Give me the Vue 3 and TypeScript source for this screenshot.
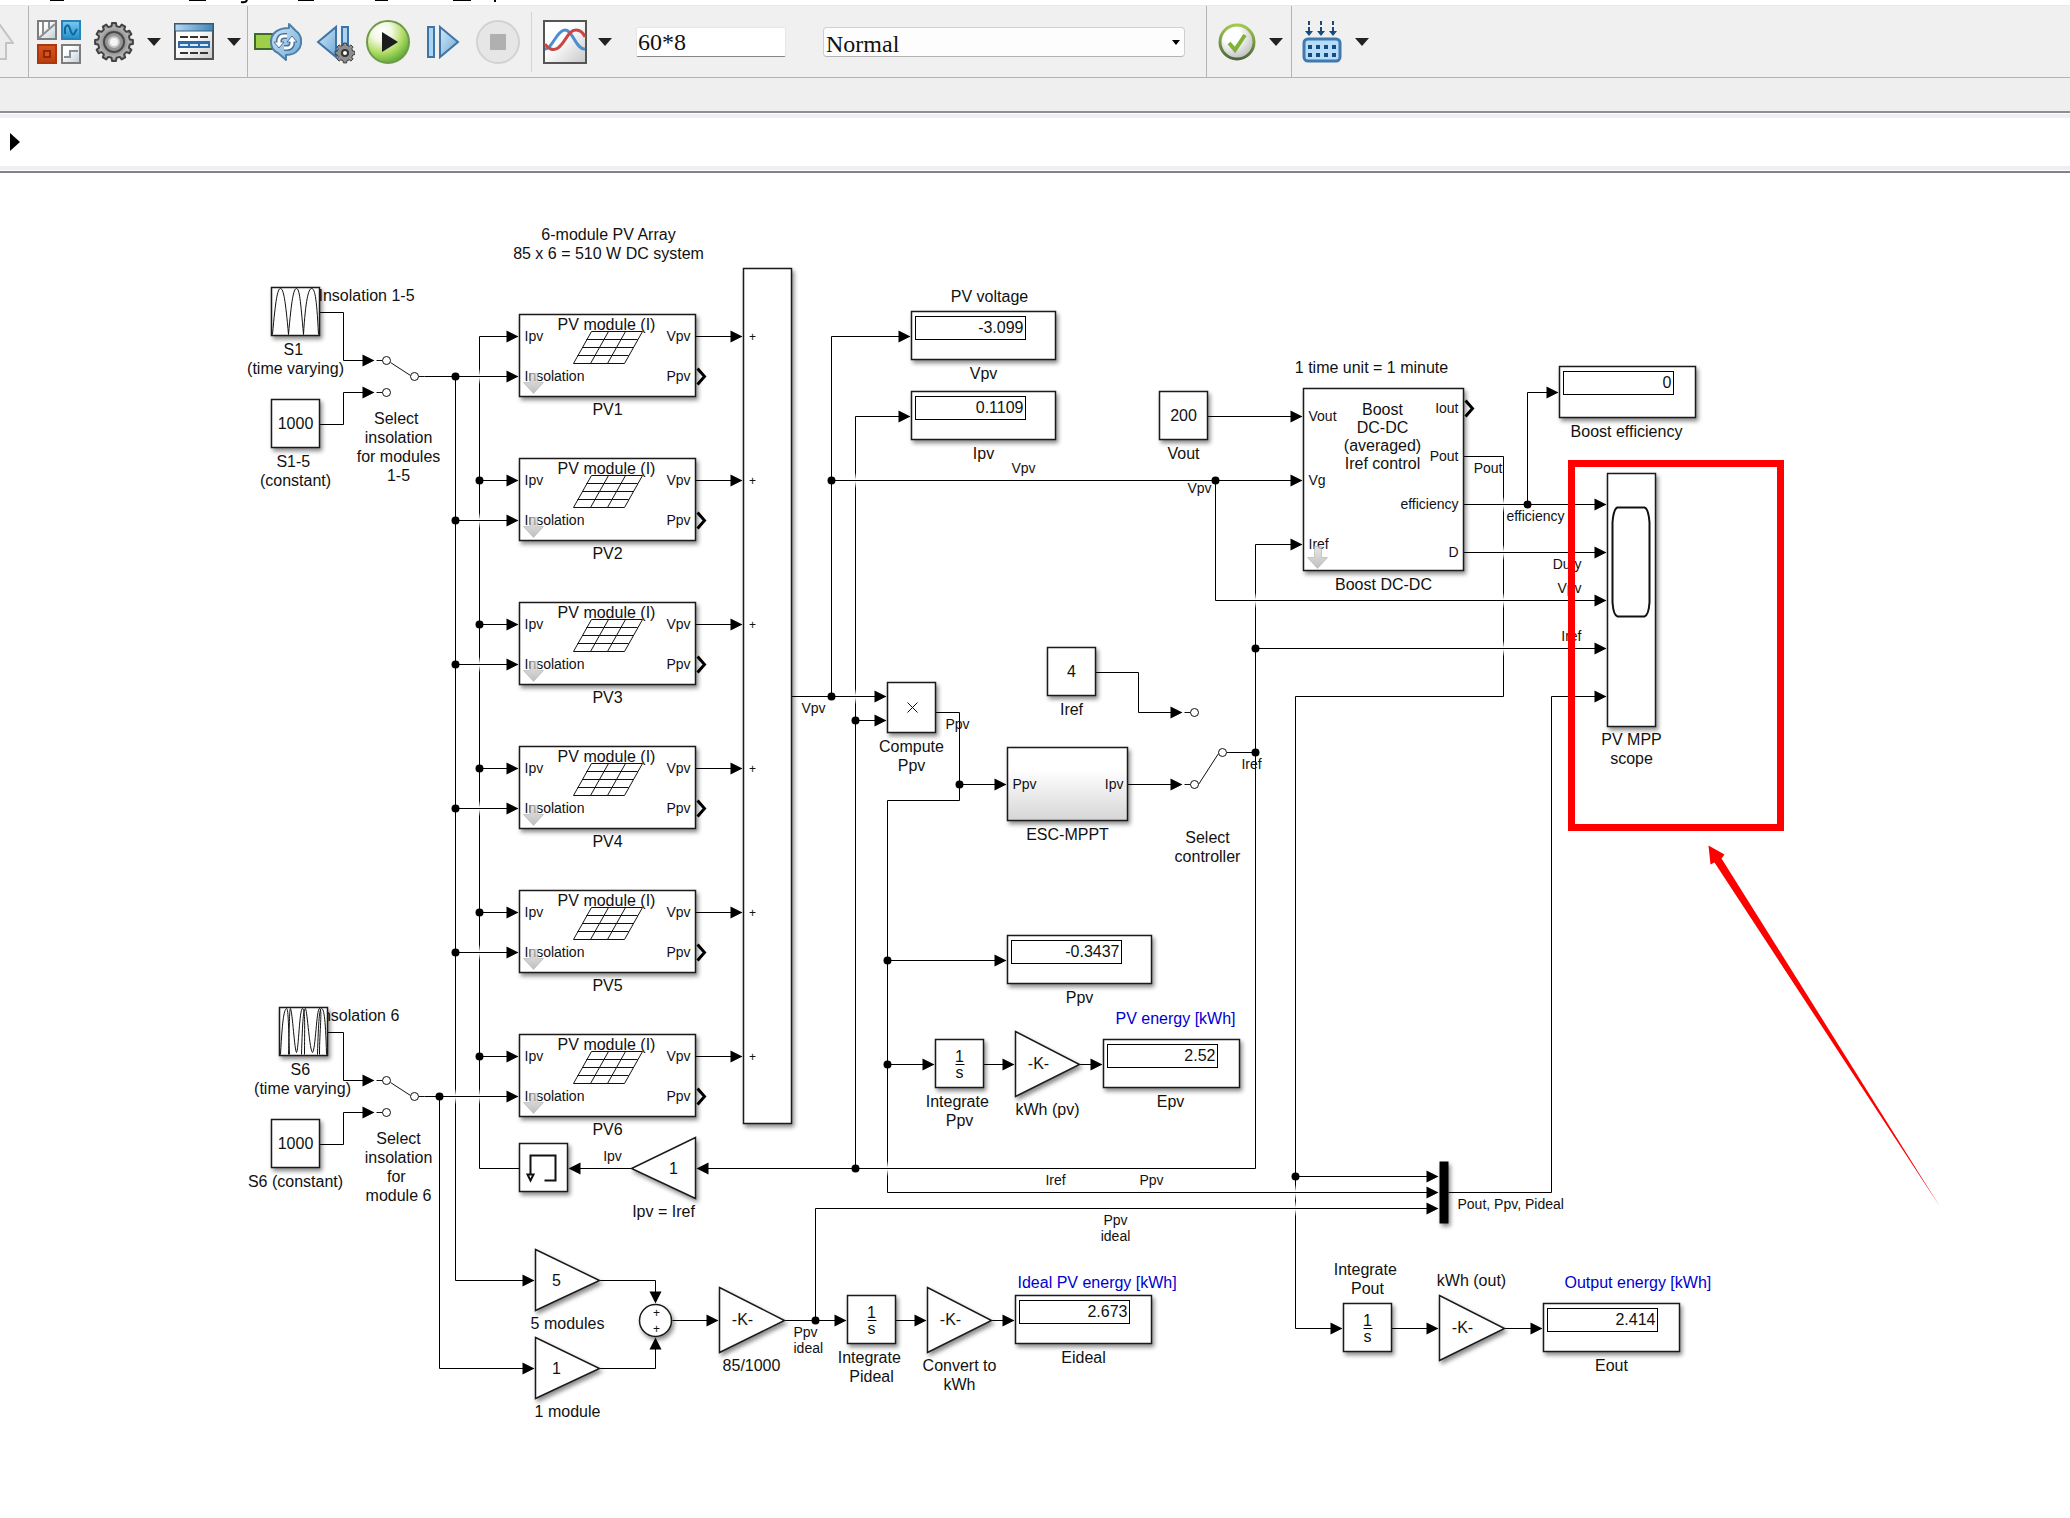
<script setup lang="ts">
import { ref } from 'vue'

type Anchor = 'start' | 'middle' | 'end'
interface Label { x: number; y: number; lines: string[]; small?: boolean; anchor?: Anchor; blue?: boolean }
interface Box { x: number; y: number; w: number; h: number }
interface Display { x: number; y: number; w: number; h: number; value: string }
interface Arrow { x: number; y: number; dir: 'right' | 'left' | 'up' | 'down' }

const stopTime = ref('60*8')
const simMode = ref('Normal')

const headerText: Label[] = [
  { x: 318, y: 301, lines: ['Insolation 1-5'], anchor: 'start' },
  { x: 317, y: 1021, lines: ['Insolation 6'], anchor: 'start' },
]

/* six PV modules, one every 144 units */
const modules = Array.from({ length: 6 }, (_, i) => ({ name: 'PV' + (i + 1), dy: i * 144 }))

const boxes: Box[] = [
  { x: 271, y: 287, w: 48, h: 48 },
  { x: 271, y: 399, w: 48, h: 48 },
  { x: 279, y: 1007, w: 48, h: 48 },
  { x: 271, y: 1119, w: 48, h: 48 },
  { x: 743, y: 268, w: 48, h: 855 },
  { x: 519, y: 1143, w: 48, h: 48 },
  { x: 887, y: 682, w: 48, h: 50 },
  { x: 1047, y: 647, w: 48, h: 48 },
  { x: 1159, y: 391, w: 48, h: 48 },
  { x: 1303, y: 388, w: 160, h: 182 },
  { x: 1607, y: 473, w: 48, h: 253 },
]

const integrators = [{ x: 935, y: 1039 }, { x: 847, y: 1295 }, { x: 1343, y: 1303 }]

const displays: Display[] = [
  { x: 911, y: 311, w: 144, h: 48, value: '-3.099' },
  { x: 911, y: 391, w: 144, h: 48, value: '0.1109' },
  { x: 1559, y: 366, w: 136, h: 51, value: '0' },
  { x: 1007, y: 935, w: 144, h: 48, value: '-0.3437' },
  { x: 1103, y: 1039, w: 136, h: 48, value: '2.52' },
  { x: 1015, y: 1295, w: 136, h: 48, value: '2.673' },
  { x: 1543, y: 1303, w: 136, h: 48, value: '2.414' },
]

const gains = [
  '535,1249 535,1310 599,1280',
  '535,1337 535,1398 599,1368',
  '719,1287 719,1352 784,1320',
  '927,1287 927,1352 991,1320',
  '1015,1031 1015,1096 1079,1064',
  '1439,1295 1439,1360 1504,1328',
  '695,1137 695,1198 631,1168',
]

/* vertical runs are drawn first so that horizontal runs hop over them */
const verticals = [
  'M343,312V360', 'M343,392V424', 'M343,1032V1080', 'M343,1112V1144',
  'M455,376V1280', 'M439,1096V1368', 'M479,336V1168',
  'M831,336V696', 'M855,416V1168', 'M887,800V1192', 'M959,712V800',
  'M1215,480V600', 'M1255,544V1168', 'M1138,672V712', 'M1295,696V1328',
  'M1503,456V696', 'M1527,392V504', 'M1551,696V1192', 'M815,1208V1320',
  'M655,1280V1296', 'M655,1344V1368',
].join('')

const horizontals = [
  'M319,312H343', 'M343,360H366', 'M319,424H343', 'M343,392H366',
  'M327,1032H343', 'M343,1080H366', 'M319,1144H343', 'M343,1112H366',
  'M424,376H510', 'M424,1096H510', 'M455,1280H526', 'M439,1368H526',
  'M599,1280H655', 'M599,1368H655', 'M672,1320H710', 'M784,1320H838',
  'M895,1320H918', 'M991,1320H1006', 'M479,1168H519', 'M576,1168H631', 'M704,1168H1255',
  'M831,336H902', 'M855,416H902', 'M831,480H1294', 'M791,696H878', 'M855,720H878',
  'M935,712H959', 'M959,784H998', 'M887,800H959', 'M1127,784H1174', 'M1095,672H1138',
  'M1138,712H1174', 'M1228,752H1255', 'M1207,416H1294', 'M1255,544H1294',
  'M1215,600H1598', 'M1255,648H1598', 'M1463,456H1503', 'M1463,504H1598', 'M1463,552H1598',
  'M1527,392H1550', 'M1295,696H1503', 'M1551,696H1598', 'M887,960H998', 'M887,1064H926',
  'M983,1064H1006', 'M1079,1064H1094', 'M1295,1176H1430', 'M887,1192H1430', 'M815,1208H1430',
  'M1448,1192H1551', 'M1295,1328H1334', 'M1391,1328H1430', 'M1504,1328H1534',
].join('')

const gaps = [
  ...modules.map((m) => ({ x: 479, y: 376 + m.dy })),
  { x: 455, y: 1096 }, { x: 855, y: 480 }, { x: 855, y: 696 }, { x: 887, y: 1168 },
  { x: 1255, y: 600 }, { x: 1295, y: 1192 }, { x: 1295, y: 1208 },
  { x: 1503, y: 504 }, { x: 1503, y: 552 }, { x: 1503, y: 600 }, { x: 1503, y: 648 },
]

const right = (x: number, ...ys: number[]): Arrow[] => ys.map((y) => ({ x, y, dir: 'right' }))
const arrows: Arrow[] = [
  ...right(374, 360, 392, 1080, 1112),
  ...right(534, 1280, 1368),
  ...right(718, 1320), ...right(846, 1320), ...right(926, 1320), ...right(1014, 1320, 1064),
  ...right(910, 336, 416), ...right(886, 696, 720), ...right(1006, 784, 960),
  ...right(1182, 712, 784), ...right(1302, 416, 480, 544), ...right(1558, 392),
  ...right(1606, 504, 552, 600, 648, 696), ...right(934, 1064), ...right(1102, 1064),
  ...right(1438, 1176, 1192, 1208, 1328), ...right(1342, 1328), ...right(1542, 1328),
  { x: 568, y: 1168, dir: 'left' }, { x: 696, y: 1168, dir: 'left' },
  { x: 655, y: 1303, dir: 'down' }, { x: 655, y: 1337, dir: 'up' },
]
function head(a: Arrow): string {
  const { x, y } = a
  if (a.dir === 'right') return `${x},${y} ${x - 12},${y - 6} ${x - 12},${y + 6}`
  if (a.dir === 'left') return `${x},${y} ${x + 12},${y - 6} ${x + 12},${y + 6}`
  if (a.dir === 'down') return `${x},${y} ${x - 6},${y - 12} ${x + 6},${y - 12}`
  return `${x},${y} ${x - 6},${y + 12} ${x + 6},${y + 12}`
}

const dots: [number, number][] = [
  [455, 376], [455, 520], [455, 664], [455, 808], [455, 952],
  [479, 480], [479, 624], [479, 768], [479, 912], [479, 1056],
  [439, 1096], [831, 480], [831, 696], [855, 720], [855, 1168], [959, 784],
  [887, 960], [887, 1064], [1215, 480], [1255, 648], [1255, 752],
  [1527, 504], [1295, 1176], [815, 1320],
]

const labels: Label[] = [
  { x: 608, y: 240, lines: ['6-module PV Array', '85 x 6 = 510 W DC system'] },
  { x: 295, y: 355, lines: ['S1\u00a0', '(time varying)'] },
  { x: 295, y: 429, lines: ['1000'] },
  { x: 295, y: 467, lines: ['S1-5\u00a0', '(constant)'] },
  { x: 398, y: 424, lines: ['Select\u00a0', 'insolation', 'for modules', '1-5'] },
  { x: 302, y: 1075, lines: ['S6\u00a0', '(time varying)'] },
  { x: 295, y: 1149, lines: ['1000'] },
  { x: 295, y: 1187, lines: ['S6 (constant)'] },
  { x: 398, y: 1144, lines: ['Select', 'insolation', 'for\u00a0', 'module 6'] },
  { x: 673, y: 1174, lines: ['1'] },
  { x: 663, y: 1217, lines: ['Ipv = Iref'] },
  { x: 556, y: 1286, lines: ['5'] },
  { x: 567, y: 1329, lines: ['5 modules'] },
  { x: 556, y: 1374, lines: ['1'] },
  { x: 567, y: 1417, lines: ['1 module'] },
  { x: 742, y: 1325, lines: ['-K-'] },
  { x: 751, y: 1371, lines: ['85/1000'] },
  { x: 950, y: 1325, lines: ['-K-'] },
  { x: 871, y: 1363, lines: ['Integrate\u00a0', 'Pideal'] },
  { x: 959, y: 1371, lines: ['Convert to', 'kWh'] },
  { x: 1083, y: 1363, lines: ['Eideal'] },
  { x: 1017, y: 1288, lines: ['Ideal PV energy [kWh]'], anchor: 'start', blue: true },
  { x: 989, y: 302, lines: ['PV voltage'] },
  { x: 983, y: 379, lines: ['Vpv'] },
  { x: 983, y: 459, lines: ['Ipv'] },
  { x: 1183, y: 421, lines: ['200'] },
  { x: 1183, y: 459, lines: ['Vout'] },
  { x: 1371, y: 373, lines: ['1 time unit = 1 minute'] },
  { x: 1383, y: 590, lines: ['Boost DC-DC'] },
  { x: 1626, y: 437, lines: ['Boost efficiency'] },
  { x: 1631, y: 745, lines: ['PV MPP', 'scope'] },
  { x: 911, y: 752, lines: ['Compute', 'Ppv'] },
  { x: 1071, y: 677, lines: ['4'] },
  { x: 1071, y: 715, lines: ['Iref'] },
  { x: 1067, y: 840, lines: ['ESC-MPPT'] },
  { x: 1207, y: 843, lines: ['Select', 'controller'] },
  { x: 1079, y: 1003, lines: ['Ppv'] },
  { x: 1115, y: 1024, lines: ['PV energy [kWh]'], anchor: 'start', blue: true },
  { x: 1038, y: 1069, lines: ['-K-'] },
  { x: 959, y: 1107, lines: ['Integrate\u00a0', 'Ppv'] },
  { x: 1047, y: 1115, lines: ['kWh (pv)'] },
  { x: 1170, y: 1107, lines: ['Epv'] },
  { x: 1367, y: 1275, lines: ['Integrate\u00a0', 'Pout'] },
  { x: 1471, y: 1286, lines: ['kWh (out)'] },
  { x: 1564, y: 1288, lines: ['Output energy [kWh]'], anchor: 'start', blue: true },
  { x: 1462, y: 1333, lines: ['-K-'] },
  { x: 1611, y: 1371, lines: ['Eout'] },
  /* signal names and port names */
  { x: 612, y: 1161, lines: ['Ipv'], small: true },
  { x: 793, y: 1337, lines: ['Ppv', 'ideal'], small: true, anchor: 'start' },
  { x: 813, y: 713, lines: ['Vpv'], small: true },
  { x: 957, y: 729, lines: ['Ppv'], small: true },
  { x: 1012, y: 789, lines: ['Ppv'], small: true, anchor: 'start' },
  { x: 1123, y: 789, lines: ['Ipv'], small: true, anchor: 'end' },
  { x: 1251, y: 769, lines: ['Iref'], small: true },
  { x: 1023, y: 473, lines: ['Vpv'], small: true },
  { x: 1199, y: 493, lines: ['Vpv'], small: true },
  { x: 1308, y: 421, lines: ['Vout'], small: true, anchor: 'start' },
  { x: 1308, y: 485, lines: ['Vg'], small: true, anchor: 'start' },
  { x: 1308, y: 549, lines: ['Iref'], small: true, anchor: 'start' },
  { x: 1458, y: 413, lines: ['Iout'], small: true, anchor: 'end' },
  { x: 1458, y: 461, lines: ['Pout'], small: true, anchor: 'end' },
  { x: 1458, y: 509, lines: ['efficiency'], small: true, anchor: 'end' },
  { x: 1458, y: 557, lines: ['D'], small: true, anchor: 'end' },
  { x: 1502, y: 473, lines: ['Pout'], small: true, anchor: 'end' },
  { x: 1564, y: 521, lines: ['efficiency'], small: true, anchor: 'end' },
  { x: 1581, y: 569, lines: ['Duty'], small: true, anchor: 'end' },
  { x: 1581, y: 593, lines: ['Vpv'], small: true, anchor: 'end' },
  { x: 1581, y: 641, lines: ['Iref'], small: true, anchor: 'end' },
  { x: 1055, y: 1185, lines: ['Iref'], small: true },
  { x: 1151, y: 1185, lines: ['Ppv'], small: true },
  { x: 1115, y: 1225, lines: ['Ppv', 'ideal'], small: true },
  { x: 1457, y: 1209, lines: ['Pout, Ppv, Pideal'], small: true, anchor: 'start' },
]

const boostText = ['Boost', 'DC-DC', '(averaged)', 'Iref control']

function gear(cx: number, cy: number, outer: number, inner: number, teeth: number): string {
  const step = (Math.PI * 2) / teeth
  const points: string[] = []
  for (let i = 0; i < teeth; i++) {
    const a = i * step - Math.PI / 2
    const spots: [number, number][] = [[inner, -0.3], [outer, -0.2], [outer, 0.2], [inner, 0.3]]
    for (const [r, k] of spots) {
      points.push(`${(cx + r * Math.cos(a + k * step)).toFixed(1)},${(cy + r * Math.sin(a + k * step)).toFixed(1)}`)
    }
  }
  return points.join(' ')
}
</script>

<template>
  <div class="window">
    <svg class="menu-edge" height="5" aria-hidden="true">
      <path d="M50,0H64V1H50ZM189,0H206V1H189ZM298,0H314V1H298ZM375,0H388V1H375ZM453,0H471V1H453Z" />
      <path d="M241,2Q246,3 247,0" fill="none" stroke="#000" stroke-width="2" />
      <path d="M494,0H496V2H494Z" />
    </svg>

    <header class="toolbar">
      <div class="group first">
        <button type="button" class="tool" aria-label="Up to parent" disabled>
          <svg width="14" height="44" viewBox="0 0 14 44">
            <path d="M-14,23L0,5L13,23H6V39H-14Z" fill="#ececec" stroke="#c4c4c4" stroke-width="2" />
          </svg>
        </button>
      </div>

      <div class="group library">
        <button type="button" class="tool" aria-label="Library browser">
          <svg width="44" height="44" viewBox="0 0 44 44">
            <defs>
              <linearGradient id="tileGrey" x2="1" y2="1"><stop offset="0.3" stop-color="#fff" /><stop offset="1" stop-color="#bccdd6" /></linearGradient>
              <linearGradient id="tileBlue" x2="0" y2="1"><stop offset="0" stop-color="#7cc8ee" /><stop offset="1" stop-color="#1f8fcd" /></linearGradient>
              <linearGradient id="tileRed" x2="0" y2="1"><stop offset="0" stop-color="#d9531e" /><stop offset="1" stop-color="#c23a0a" /></linearGradient>
            </defs>
            <rect x="1" y="1" width="18" height="18" fill="url(#tileGrey)" stroke="#7d7d7d" stroke-width="2" />
            <path d="M6,2V14M12,2V8M2,18L18,4" fill="none" stroke="#8a8f93" stroke-width="2" />
            <rect x="25" y="1" width="18" height="18" fill="url(#tileBlue)" stroke="#2583b8" stroke-width="2" />
            <path d="M28,14V8Q31,2 33,9T37,14L40,9" fill="none" stroke="#0c679d" stroke-width="2" />
            <rect x="1" y="25" width="18" height="18" fill="url(#tileRed)" stroke="#a8380f" stroke-width="2" />
            <rect x="7" y="31" width="6" height="6" fill="#d9531e" stroke="#8c2a08" stroke-width="2" />
            <rect x="25" y="25" width="18" height="18" fill="url(#tileGrey)" stroke="#7d7d7d" stroke-width="2" />
            <path d="M27,37H33V31H41" fill="none" stroke="#8a8f93" stroke-width="2" />
          </svg>
        </button>
        <button type="button" class="tool" aria-label="Model configuration">
          <svg width="40" height="44" viewBox="0 0 40 44">
            <defs>
              <radialGradient id="gearFill"><stop offset="0.5" stop-color="#8a8a8a" /><stop offset="0.8" stop-color="#b4b4b4" /><stop offset="1" stop-color="#8e8e8e" /></radialGradient>
            </defs>
            <polygon :points="gear(20, 22, 19, 16, 12)" fill="url(#gearFill)" stroke="#444" stroke-width="2" stroke-linejoin="round" />
            <circle cx="20" cy="22" r="10" fill="#979797" stroke="#4a4a4a" stroke-width="2" />
            <circle cx="20" cy="22" r="5" fill="#f6f6f6" stroke="#c8c8c8" stroke-width="2" />
          </svg>
        </button>
        <button type="button" class="tool" aria-label="Configuration options">
          <svg width="14" height="8" viewBox="0 0 14 8"><path d="M0,0H14L7,8Z" fill="#222" /></svg>
        </button>
        <button type="button" class="tool" aria-label="Model explorer">
          <svg width="40" height="38" viewBox="0 0 40 38">
            <defs>
              <linearGradient id="paneFill" x2="1" y2="1"><stop offset="0.4" stop-color="#fff" /><stop offset="1" stop-color="#c8c8c8" /></linearGradient>
              <linearGradient id="paneTitle" x2="1" y2="0"><stop offset="0" stop-color="#b4d9f5" /><stop offset="1" stop-color="#3d86bd" /></linearGradient>
            </defs>
            <rect x="1" y="1" width="38" height="35" fill="url(#paneFill)" stroke="#4d5257" stroke-width="2" />
            <rect x="1" y="1" width="38" height="7" fill="url(#paneTitle)" stroke="#3f5a70" stroke-width="1" />
            <path d="M6,14H14M16,14H24M26,14H34M6,30H14M16,30H24M26,30H34" stroke="#333" stroke-width="2" />
            <rect x="4" y="18" width="32" height="7" fill="#2b6cae" />
            <path d="M6,22H14M16,22H24M26,22H34" stroke="#dbeafa" stroke-width="2" />
          </svg>
        </button>
        <button type="button" class="tool" aria-label="Explorer options">
          <svg width="14" height="8" viewBox="0 0 14 8"><path d="M0,0H14L7,8Z" fill="#222" /></svg>
        </button>
      </div>

      <div class="group simulate">
        <button type="button" class="tool" aria-label="Update diagram">
          <svg width="48" height="40" viewBox="0 0 48 40">
            <defs>
              <linearGradient id="blueFill" x2="1" y2="1"><stop offset="0" stop-color="#d3e9f8" /><stop offset="1" stop-color="#6fa8d6" /></linearGradient>
            </defs>
            <rect x="1" y="12" width="20" height="15" fill="#9fcf48" stroke="#3d6b2a" stroke-width="2" />
            <path d="M17,20C17,11 24,6 35,6V2L42,9C49,14 48,24 44,28C41,32 37,33 32,33V38L24,31C19,29 17,25 17,20Z" fill="url(#blueFill)" stroke="#4f7ea6" stroke-width="2" stroke-linejoin="round" />
            <path d="M25,22V18Q26,14 30,14H33M38,17V22Q37,26 33,26H30" fill="none" stroke="#48739b" stroke-width="6" />
            <path d="M20,20H30L25,26ZM33,20H43L38,14Z" fill="#fff" stroke="#48739b" stroke-width="1" />
            <path d="M25,22V18Q26,14 30,14H33M38,17V22Q37,26 33,26H30" fill="none" stroke="#fff" stroke-width="3" />
          </svg>
        </button>
        <button type="button" class="tool" aria-label="Step back">
          <svg width="42" height="44" viewBox="0 0 42 44">
            <path d="M5,22L23,7V37Z" fill="url(#blueFill)" stroke="#3f74a6" stroke-width="2" />
            <rect x="29" y="7" width="6" height="24" fill="#a9d3f0" stroke="#3f74a6" stroke-width="2" />
            <polygon :points="gear(32, 33, 10, 8, 8)" fill="#8d8d8d" stroke="#3c3c3c" stroke-width="1" />
            <circle cx="32" cy="33" r="3" fill="#fff" stroke="#333" stroke-width="2" />
          </svg>
        </button>
        <button type="button" class="tool" aria-label="Run">
          <svg width="44" height="44" viewBox="0 0 44 44">
            <defs>
              <radialGradient id="runFill" cx="0.35" cy="0.25" r="0.8"><stop offset="0" stop-color="#fff" /><stop offset="0.3" stop-color="#f2f8e2" /><stop offset="0.65" stop-color="#aedb62" /><stop offset="1" stop-color="#55a534" /></radialGradient>
            </defs>
            <circle cx="22" cy="22" r="21" fill="url(#runFill)" stroke="#6f9a4c" stroke-width="2" />
            <path d="M16,12L32,22L16,32Z" fill="#1c1c1c" />
          </svg>
        </button>
        <button type="button" class="tool" aria-label="Step forward">
          <svg width="44" height="44" viewBox="0 0 44 44">
            <rect x="7" y="7" width="6" height="30" fill="#a9d3f0" stroke="#3f74a6" stroke-width="2" />
            <path d="M19,7L37,22L19,37Z" fill="url(#blueFill)" stroke="#3f74a6" stroke-width="2" />
          </svg>
        </button>
        <button type="button" class="tool" aria-label="Stop" disabled>
          <svg width="44" height="44" viewBox="0 0 44 44">
            <circle cx="22" cy="22" r="21" fill="#e6e6e6" stroke="#d2d2d2" stroke-width="2" />
            <rect x="14" y="14" width="16" height="16" fill="#b0b0b0" />
          </svg>
        </button>
        <span class="divider"></span>
        <button type="button" class="tool" aria-label="Simulation data inspector">
          <svg width="44" height="44" viewBox="0 0 44 44">
            <rect x="1" y="1" width="42" height="42" fill="url(#paneFill)" stroke="#555" stroke-width="2" />
            <path d="M2,29C9,29 14,10 22,10S33,30 42,29" fill="none" stroke="#4b8fd0" stroke-width="3" />
            <path d="M2,24C5,29 10,31 15,28C23,22 25,10 33,10Q39,10 42,17" fill="none" stroke="#cc4545" stroke-width="3" />
          </svg>
        </button>
        <button type="button" class="tool" aria-label="Inspector options">
          <svg width="14" height="8" viewBox="0 0 14 8"><path d="M0,0H14L7,8Z" fill="#222" /></svg>
        </button>
        <input v-model="stopTime" class="stop-time" type="text" aria-label="Simulation stop time" />
        <div class="mode">
          <select v-model="simMode" aria-label="Simulation mode">
            <option>Normal</option>
            <option>Accelerator</option>
          </select>
          <svg class="mode-caret" width="8" height="5" viewBox="0 0 8 5"><path d="M0,0H8L4,5Z" /></svg>
        </div>
      </div>

      <div class="group advisor">
        <button type="button" class="tool" aria-label="Model advisor">
          <svg width="38" height="38" viewBox="0 0 38 38">
            <defs>
              <linearGradient id="ringFill" x2="0" y2="1"><stop offset="0" stop-color="#a2c94e" /><stop offset="1" stop-color="#4d663a" /></linearGradient>
              <radialGradient id="discFill" cx="0.35" cy="0.3" r="0.8"><stop offset="0.3" stop-color="#fff" /><stop offset="1" stop-color="#b5b5b5" /></radialGradient>
            </defs>
            <circle cx="19" cy="19" r="17" fill="url(#discFill)" stroke="url(#ringFill)" stroke-width="3" />
            <path d="M11,20L17,27L27,12" fill="none" stroke="#7fb236" stroke-width="4" />
          </svg>
        </button>
        <button type="button" class="tool" aria-label="Advisor options">
          <svg width="14" height="8" viewBox="0 0 14 8"><path d="M0,0H14L7,8Z" fill="#222" /></svg>
        </button>
      </div>

      <div class="group build">
        <button type="button" class="tool" aria-label="Build model">
          <svg width="40" height="42" viewBox="0 0 40 42">
            <path d="M7,0V4M19,0V4M31,0V4M7,6V12M19,6V12M31,6V12" stroke="#164b7c" stroke-width="2" />
            <path d="M3,10H11L7,15ZM15,10H23L19,15ZM27,10H35L31,15Z" fill="#164b7c" />
            <rect x="2" y="18" width="36" height="22" rx="4" fill="#b5dcfa" stroke="#3f79ad" stroke-width="3" />
            <path d="M6,26H34M6,34H34" stroke="#164b7c" stroke-width="4" stroke-dasharray="4 4" />
          </svg>
        </button>
        <button type="button" class="tool" aria-label="Build options">
          <svg width="14" height="8" viewBox="0 0 14 8"><path d="M0,0H14L7,8Z" fill="#222" /></svg>
        </button>
      </div>
    </header>

    <div class="tab-strip"></div>

    <nav class="path-bar" aria-label="Model path">
      <button type="button" class="tool" aria-label="Show path">
        <svg width="10" height="18" viewBox="0 0 10 18"><path d="M0,0L10,9L0,18Z" /></svg>
      </button>
    </nav>

    <main class="canvas">
      <svg class="diagram" role="img" aria-label="PV system block diagram">
        <defs>
          <linearGradient id="hop" x2="0" y2="1">
            <stop offset="0" stop-color="#fff" stop-opacity="0" /><stop offset="0.45" stop-color="#fff" />
            <stop offset="0.55" stop-color="#fff" /><stop offset="1" stop-color="#fff" stop-opacity="0" />
          </linearGradient>
          <linearGradient id="subsystem" x2="0" y2="1"><stop offset="0.3" stop-color="#fff" /><stop offset="1" stop-color="#d6d6d6" /></linearGradient>
          <linearGradient id="lookUnder" x2="0" y2="1"><stop offset="0" stop-color="#dcdcdc" /><stop offset="1" stop-color="#a4a4a4" /></linearGradient>
        </defs>
        <!-- model coordinates start at the top of the window; the half unit keeps hairlines crisp -->
        <g transform="translate(0.5 -172.5)">
          <text v-for="t in headerText" :key="t.x" :x="t.x" :y="t.y" class="t16">{{ t.lines[0] }}</text>

          <path class="wire" :d="verticals" />
          <rect v-for="(g, i) in gaps" :key="'g' + i" :x="g.x - 2" :y="g.y - 8" width="4" height="16" fill="url(#hop)" />
          <path class="wire" :d="horizontals" />

          <g class="shapes">
            <rect v-for="(b, i) in boxes" :key="'b' + i" class="block" :x="b.x" :y="b.y" :width="b.w" :height="b.h" />
            <rect v-for="m in modules" :key="m.name" class="block" x="519" :y="314 + m.dy" width="176" height="82" />
            <rect v-for="(b, i) in integrators" :key="'i' + i" class="block" :x="b.x" :y="b.y" width="48" height="48" />
            <rect v-for="(d, i) in displays" :key="'d' + i" class="block" :x="d.x" :y="d.y" :width="d.w" :height="d.h" />
            <polygon v-for="p in gains" :key="p" class="block" :points="p" />
            <circle class="block" cx="655" cy="1320" r="16" />
            <rect class="block shaded" x="1007" y="747" width="120" height="73" />
            <rect x="1439" y="1161" width="9" height="62" />
          </g>

          <!-- block artwork -->
          <path class="art" d="M272,334C275,300 277,288 280,288S285,300 288,334C291,300 293,288 296,288S300,300 303,334C305,300 308,288 311,288S316,294 318,334" />
          <path class="art" d="M280,1054C282,1015 284,1009 286,1008S288,1030 289,1054M288,1054C289,1020 289,1008 290,1008C292,1012 294,1050 296,1052C298,1050 299,1008 302,1008S304,1030 304,1054M301,1054C302,1020 303,1008 305,1008C307,1012 309,1050 312,1052C315,1050 316,1008 319,1008S319,1030 319,1054M317,1054C318,1020 319,1008 321,1008S325,1014 326,1054" />
          <g class="art bold">
            <path d="M544,1180H555V1155H530V1174" />
            <path d="M527,1174H533L530,1180Z" />
            <path d="M1616,507H1644Q1648,508 1649,522V602Q1648,615 1644,616H1617Q1613,615 1612,602V522Q1613,508 1617,507Z" />
          </g>
          <path class="art" d="M907,702L917,712M917,702L907,712" />

          <g v-for="m in modules" :key="'m' + m.name" :transform="`translate(0 ${m.dy})`">
            <path class="wire" d="M479,336H510M455,376H510M695,336H734" />
            <polygon points="518,336 506,330 506,342" />
            <polygon points="518,376 506,370 506,382" />
            <polygon points="742,336 730,330 730,342" />
            <path class="art" d="M591,331H642L624,363H573ZM586,339H637M582,347H633M577,355H628M608,331L590,363M625,331L607,363" />
            <path class="chevron" d="M697,368L704,376L697,384" />
            <text x="606" y="330" class="t16 mid">PV module (I)</text>
            <text x="524" y="341" class="t14">Ipv</text>
            <text x="524" y="381" class="t14">Insolation</text>
            <text x="690" y="341" class="t14 end">Vpv</text>
            <text x="690" y="381" class="t14 end">Ppv</text>
            <text x="607" y="415" class="t16 mid">{{ m.name }}</text>
            <text x="752" y="341" class="t12 mid">+</text>
            <path class="under" d="M530,373H537V382H543L533,393L523,382H530Z" />
          </g>
          <path class="chevron" d="M1465,400L1472,408L1465,416" />

          <polygon v-for="(a, i) in arrows" :key="'a' + i" :points="head(a)" />
          <circle v-for="(d, i) in dots" :key="'n' + i" :cx="d[0]" :cy="d[1]" r="4" />

          <!-- manual switches -->
          <g v-for="dy in [0, 720]" :key="dy" :transform="`translate(0 ${dy})`" class="art switch">
            <path d="M376,360H382M376,392H382M390,362L410,375M418,376H424" />
            <circle cx="386" cy="360" r="4" /><circle cx="386" cy="392" r="4" /><circle cx="414" cy="376" r="4" />
          </g>
          <g class="art switch">
            <path d="M1184,712H1190M1184,784H1190M1198,784L1218,753M1226,752H1230" />
            <circle cx="1194" cy="712" r="4" /><circle cx="1194" cy="784" r="4" /><circle cx="1222" cy="752" r="4" />
          </g>

          <g v-for="(d, i) in displays" :key="'v' + i">
            <rect class="readout" :x="d.x + 4" :y="d.y + 5" width="110" height="23" />
            <text :x="d.x + 112" :y="d.y + 22" class="t16 end">{{ d.value }}</text>
          </g>

          <g v-for="(b, i) in integrators" :key="'s' + i">
            <text :x="b.x + 24" :y="b.y + 23" class="t16 mid">1</text>
            <path class="wire" :d="`M${b.x + 20},${b.y + 25}h9`" />
            <text :x="b.x + 24" :y="b.y + 39" class="t16 mid">s</text>
          </g>

          <text x="656" y="1317" class="t12 mid">+</text>
          <text x="656" y="1333" class="t12 mid">+</text>

          <text v-for="(line, i) in boostText" :key="line" x="1382" :y="415 + i * 18" class="t16 mid">{{ line }}</text>

          <template v-for="(l, i) in labels" :key="'l' + i">
            <text
              v-for="(line, k) in l.lines"
              :key="k"
              :x="l.x"
              :y="l.y + k * (l.small ? 16 : 19)"
              :class="[l.small ? 't14' : 't16', { mid: !l.anchor, end: l.anchor === 'end', blue: l.blue }]"
            >{{ line }}</text>
          </template>
          <path class="under" d="M1314,546H1321V557H1327L1317,568L1307,557H1314Z" />

          <!-- review annotation -->
          <rect class="callout" x="1571" y="463" width="209" height="364" />
          <polygon class="pointer" points="1708,845 1724,854 1721,858 1940,1207 1714,862 1710,864" />
        </g>
      </svg>
    </main>
  </div>
</template>

<style>
body {
  background: #fff;
}
</style>

<style scoped>
.window {
  display: flex;
  flex-direction: column;
  min-height: 100vh;
  font-family: "Liberation Sans", Arial, sans-serif;
}
.menu-edge {
  display: block;
  width: 100%;
  background: #fff;
  border-bottom: 1px solid #e9e9e9;
}
.toolbar {
  display: flex;
  height: 71px;
  background: #f0f0f0;
  border-bottom: 1px solid #b4b4b4;
}
.group {
  display: flex;
  align-items: center;
  gap: 13px;
  flex: none;
  border-right: 1px solid #b4b4b4;
}
.group.first {
  padding-right: 14px;
}
.library {
  padding: 0 6px 0 8px;
}
.simulate {
  gap: 11px;
  padding: 0 21px 0 6px;
}
.advisor {
  padding: 0 8px 0 11px;
}
.build {
  padding-left: 10px;
  border-right: 0;
}
.tool {
  display: block;
  flex: none;
  padding: 0;
  border: 0;
  background: none;
}
.tool svg {
  display: block;
}
.divider {
  width: 1px;
  height: 60px;
  background: #d4d4d4;
}
.stop-time,
.mode select {
  box-sizing: border-box;
  height: 30px;
  font-family: "Liberation Serif", serif;
  font-size: 24px;
  line-height: 28px;
  color: #111;
}
.stop-time {
  width: 150px;
  margin-left: 13px;
  padding: 2px 1px 0;
  background: #fff;
  border: 1px solid #e6e6e6;
  border-bottom-color: #858585;
  border-radius: 2px;
}
.mode {
  position: relative;
  margin-left: 26px;
}
.mode select {
  display: block;
  width: 362px;
  padding: 2px 2px 0;
  appearance: none;
  background: #fdfdfd;
  border: 1px solid #cfcfcf;
  border-bottom-color: #b4b4b4;
  border-radius: 4px;
}
.mode-caret {
  position: absolute;
  top: 13px;
  right: 5px;
  pointer-events: none;
}
.tab-strip {
  height: 33px;
  background: #efefef;
  border-bottom: 2px solid #8c8c92;
}
.path-bar {
  display: flex;
  align-items: center;
  height: 48px;
  margin-top: 1px;
  padding-left: 10px;
  background: #fff;
  border-top: 4px solid #efeff1;
  border-bottom: 4px solid #efeff1;
}
.canvas {
  flex: 1;
  margin-top: 1px;
  border-top: 2px solid #80838f;
  overflow: hidden;
}
.diagram {
  display: block;
  width: 100%;
  height: 1345px;
}
.diagram text {
  fill: #111;
  transform: translateY(-1px);
}
.diagram .blue {
  fill: #0000d0;
}
.t16 {
  font-size: 16px;
}
.t14 {
  font-size: 14px;
}
.t12 {
  font-size: 12px;
}
.mid {
  text-anchor: middle;
}
.end {
  text-anchor: end;
}
.wire {
  fill: none;
  stroke: #000;
  stroke-width: 1;
}
.shapes {
  filter: drop-shadow(2px 3px 2px rgba(0, 0, 0, 0.45));
}
.block {
  fill: #fff;
  stroke: #1a1a1a;
  stroke-width: 1.5;
}
.block.shaded {
  fill: url(#subsystem);
}
.art {
  fill: none;
  stroke: #111;
  stroke-width: 1;
}
.bold {
  stroke-width: 2;
}
.switch circle {
  fill: #fff;
}
.readout {
  fill: #fff;
  stroke: #000;
  stroke-width: 1;
}
.chevron {
  fill: none;
  stroke: #000;
  stroke-width: 3;
}
.under {
  fill: url(#lookUnder);
  fill-opacity: 0.7;
  stroke: #b0b0b0;
  stroke-opacity: 0.6;
  stroke-width: 1;
}
.callout {
  fill: none;
  stroke: #f00;
  stroke-width: 7;
}
.pointer {
  fill: #f00;
}
</style>
